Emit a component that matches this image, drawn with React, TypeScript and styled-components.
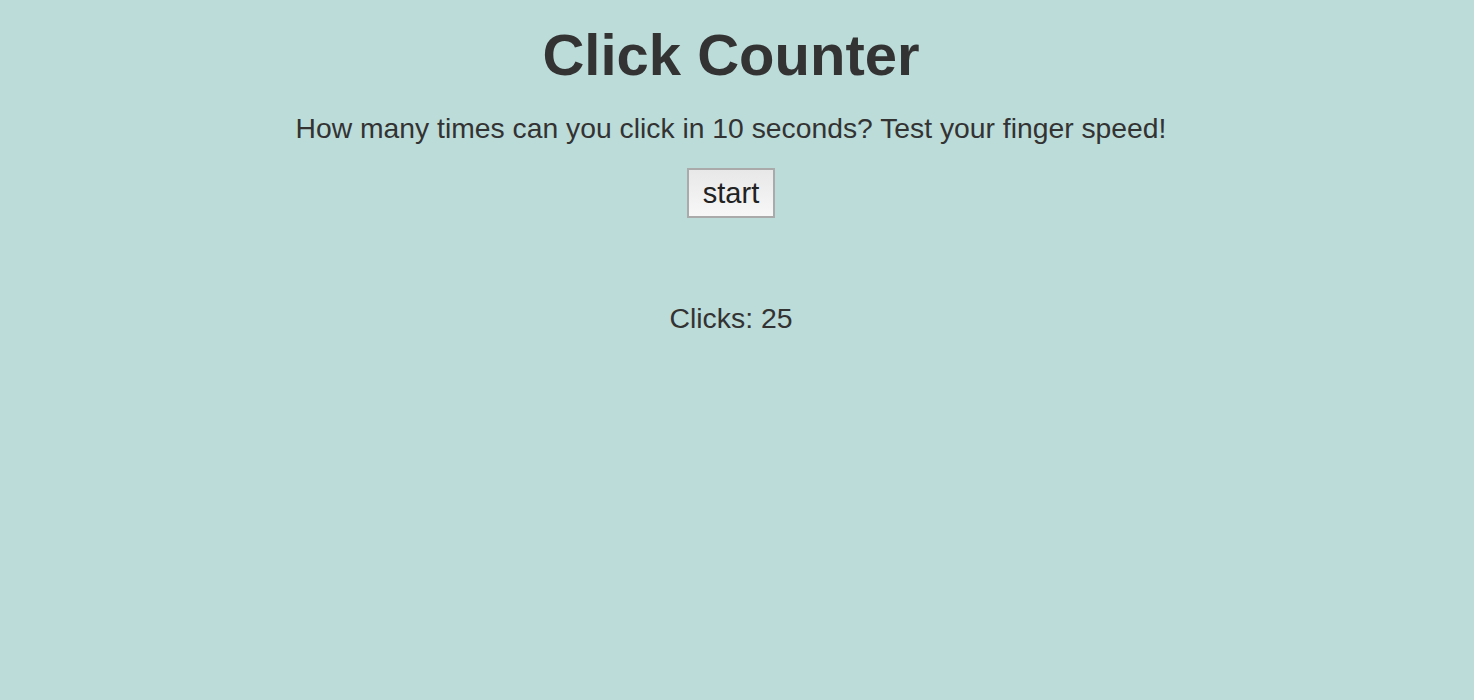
import React, { useState } from "react";
import styled, { createGlobalStyle } from "styled-components";

const GlobalStyle = createGlobalStyle`
  html, body {
    margin: 0;
    padding: 0;
    background: #bcdcd9;
  }
  body {
    font-family: "Liberation Sans", Arial, Helvetica, sans-serif;
    color: #333;
  }
`;

const App: React.FC = () => {
  const [clicks, setClicks] = useState(25);

  return (
    <>
      <GlobalStyle />
      <Page>
        <Title>Click Counter</Title>
        <Subtitle>
          How many times can you click in 10 seconds? Test your finger speed!
        </Subtitle>
        <StartButton onClick={() => setClicks(clicks + 1)}>start</StartButton>
        <Count>Clicks: {clicks}</Count>
      </Page>
    </>
  );
};

const Page = styled.div`
  display: flex;
  flex-direction: column;
  align-items: center;
  min-height: 700px;
  padding-right: 12px;
  box-sizing: border-box;
`;

const Title = styled.h1`
  margin: 20px 0 0;
  font-size: 58px;
  font-weight: bold;
  line-height: 70px;
  color: #333;
`;

const Subtitle = styled.p`
  margin: 23px 0 0;
  font-size: 28.3px;
  line-height: 30px;
  color: #333;
`;

const StartButton = styled.button`
  margin-top: 25px;
  height: 50px;
  padding: 0 14px;
  font-family: "Liberation Sans", Arial, sans-serif;
  font-size: 29px;
  color: #222;
  border: 2px solid #aaa;
  border-radius: 0;
  background: linear-gradient(#e8e8e8, #f7f7f7);
  cursor: pointer;
`;

const Count = styled.p`
  margin: 85px 0 0;
  font-size: 28.4px;
  line-height: 30px;
  color: #333;
`;

export default App;
